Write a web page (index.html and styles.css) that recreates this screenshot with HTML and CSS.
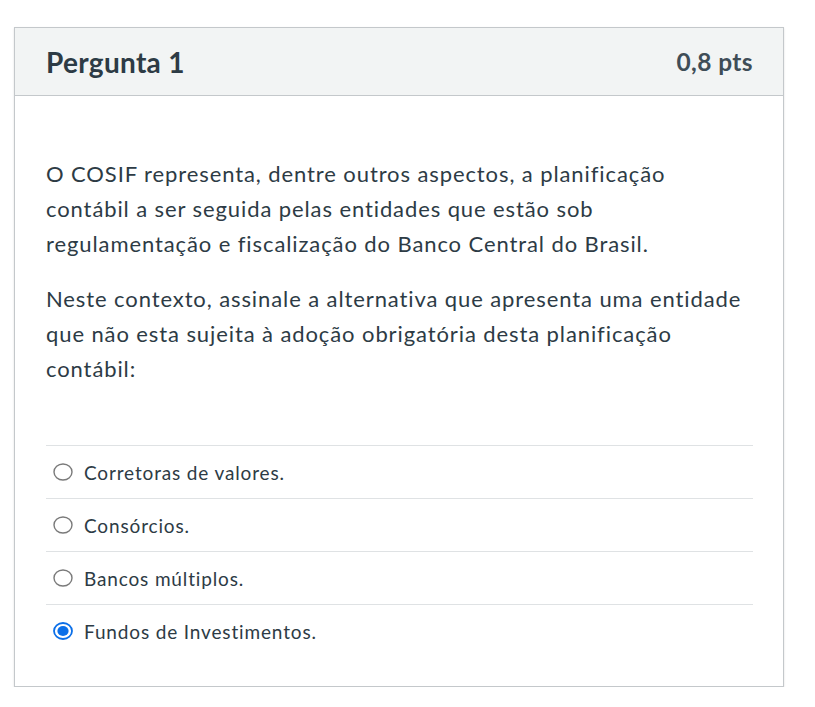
FILE: index.html
```html
<!DOCTYPE html>
<html lang="pt">
<head>
<meta charset="utf-8">
<link rel="stylesheet" href="styles.css">
</head>
<body>
<div class="card">
  <div class="card-header">
    <h2 class="title">Pergunta 1</h2>
    <span class="pts">0,8 pts</span>
  </div>
  <div class="card-body">
    <div class="question">
      <p>O COSIF representa, dentre outros aspectos, a planificação contábil a ser seguida pelas entidades que estão sob regulamentação e fiscalização do Banco Central do Brasil.</p>
      <p>Neste contexto, assinale a alternativa que apresenta uma entidade que não esta sujeita à adoção obrigatória desta planificação contábil:</p>
    </div>
    <div class="answers">
      <div class="answer">
        <svg class="radio" viewBox="0 0 20 18" width="20" height="18"><ellipse cx="10" cy="9" rx="9" ry="8" fill="#fff" stroke="#7a7a7a" stroke-width="1.4"/></svg>
        <span>Corretoras de valores.</span>
      </div>
      <div class="answer">
        <svg class="radio" viewBox="0 0 20 18" width="20" height="18"><ellipse cx="10" cy="9" rx="9" ry="8" fill="#fff" stroke="#7a7a7a" stroke-width="1.4"/></svg>
        <span>Consórcios.</span>
      </div>
      <div class="answer">
        <svg class="radio" viewBox="0 0 20 18" width="20" height="18"><ellipse cx="10" cy="9" rx="9" ry="8" fill="#fff" stroke="#7a7a7a" stroke-width="1.4"/></svg>
        <span>Bancos múltiplos.</span>
      </div>
      <div class="answer">
        <svg class="radio" viewBox="0 0 20 18" width="20" height="18"><ellipse cx="10" cy="9" rx="9" ry="8" fill="#fff" stroke="#0b6fe8" stroke-width="1.8"/><ellipse cx="10" cy="9" rx="5.6" ry="5" fill="#0b6fe8"/></svg>
        <span>Fundos de Investimentos.</span>
      </div>
    </div>
  </div>
</div>
</body>
</html>
```

FILE: styles.css
```css
html, body {
  margin: 0;
  padding: 0;
  background: #ffffff;
}
body {
  font-family: Lato, "Noto Sans", sans-serif;
  color: #2d3b45;
  padding: 27px 0 0 14px;
}
.card {
  width: 768px;
  border: 1px solid #c4c8cb;
  box-shadow: 0 1px 2px rgba(0,0,0,0.12);
  background: #fff;
}
.card-header {
  height: 67px;
  background: #f2f4f4;
  border-bottom: 1px solid #c4c8cb;
  display: flex;
  align-items: center;
  justify-content: space-between;
  padding: 0 30px 0 31px;
}
.title {
  margin: 0;
  font-size: 28px;
  font-weight: 700;
  letter-spacing: 0.3px;
  color: #2d3b45;
}
.pts {
  font-size: 24.5px;
  font-weight: 700;
  letter-spacing: 0.4px;
  color: #3f4d57;
}
.card-body {
  padding: 60px 30px 29px 31px;
}
.question p {
  margin: 0 0 20px 0;
  font-size: 22px;
  line-height: 35px;
  letter-spacing: 0.9px;
}
.question p:last-child {
  margin-bottom: 0;
}
.answers {
  margin-top: 59px;
}
.answer {
  height: 52px;
  border-top: 1px solid #dfe2e4;
  display: flex;
  align-items: center;
  gap: 11px;
  padding-left: 7px;
  font-size: 19px;
  letter-spacing: 0.85px;
}
.radio {
  flex: none;
}
```
